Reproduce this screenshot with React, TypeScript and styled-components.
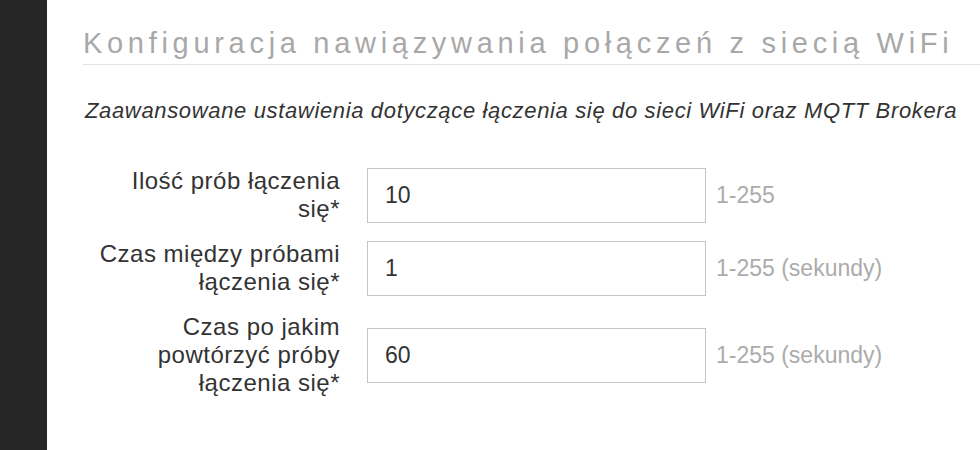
import React from 'react'
import styled, { createGlobalStyle } from 'styled-components'

const GlobalStyle = createGlobalStyle`
  html, body {
    margin: 0;
    padding: 0;
    background: #ffffff;
  }
  body {
    font-family: 'Liberation Sans', Arial, sans-serif;
    color: #333333;
  }
`

type Field = {
  label: string
  value: string
  hint: string
}

const fields: Field[] = [
  { label: 'Ilość prób łączenia się*', value: '10', hint: '1-255' },
  { label: 'Czas między próbami łączenia się*', value: '1', hint: '1-255 (sekundy)' },
  { label: 'Czas po jakim powtórzyć próby łączenia się*', value: '60', hint: '1-255 (sekundy)' },
]

const App: React.FC = () => (
  <>
    <GlobalStyle />
    <StyledPage>
      <StyledSidebar />
      <StyledMain>
        <StyledTitle>Konfiguracja nawiązywania połączeń z siecią WiFi</StyledTitle>
        <StyledDescription>
          Zaawansowane ustawienia dotyczące łączenia się do sieci WiFi oraz MQTT Brokera
        </StyledDescription>
        <StyledForm>
          {fields.map((field) => (
            <StyledRow key={field.label}>
              <StyledLabel>{field.label}</StyledLabel>
              <StyledInput type='text' defaultValue={field.value} />
              <StyledHint>{field.hint}</StyledHint>
            </StyledRow>
          ))}
        </StyledForm>
      </StyledMain>
    </StyledPage>
  </>
)

const StyledPage = styled.div`
  display: flex;
  min-height: 100vh;
  overflow: hidden;
`

const StyledSidebar = styled.div`
  flex: 0 0 47px;
  background: #262626;
`

const StyledMain = styled.div`
  flex: 1;
  min-width: 0;
  padding: 27px 0 0 36px;
`

const StyledTitle = styled.h1`
  margin: 0;
  padding-bottom: 5px;
  font-size: 29px;
  line-height: 32px;
  font-weight: normal;
  letter-spacing: 4.7px;
  color: #a8a8a8;
  white-space: nowrap;
  border-bottom: 1px solid #e2e2e2;
`

const StyledDescription = styled.p`
  margin: 33px 0 0 2px;
  font-size: 22px;
  line-height: 26px;
  font-style: italic;
  letter-spacing: 0.65px;
  color: #333333;
  white-space: nowrap;
`

const StyledForm = styled.div`
  display: flex;
  flex-direction: column;
  gap: 17px;
  margin-top: 43px;
  padding-left: 2px;
`

const StyledRow = styled.div`
  display: flex;
  align-items: center;
`

const StyledLabel = styled.label`
  flex: 0 0 255px;
  margin-right: 27px;
  text-align: right;
  font-size: 24px;
  line-height: 28px;
  letter-spacing: 0.5px;
  color: #333333;
`

const StyledInput = styled.input`
  box-sizing: border-box;
  width: 339px;
  height: 55px;
  padding: 0 17px;
  border: 1px solid #c6c6c6;
  border-radius: 0;
  background: #ffffff;
  font-family: 'Liberation Sans', Arial, sans-serif;
  font-size: 23px;
  color: #333333;
  outline: none;
`

const StyledHint = styled.span`
  margin-left: 10px;
  font-size: 23px;
  color: #ababab;
  white-space: nowrap;
`

export default App
